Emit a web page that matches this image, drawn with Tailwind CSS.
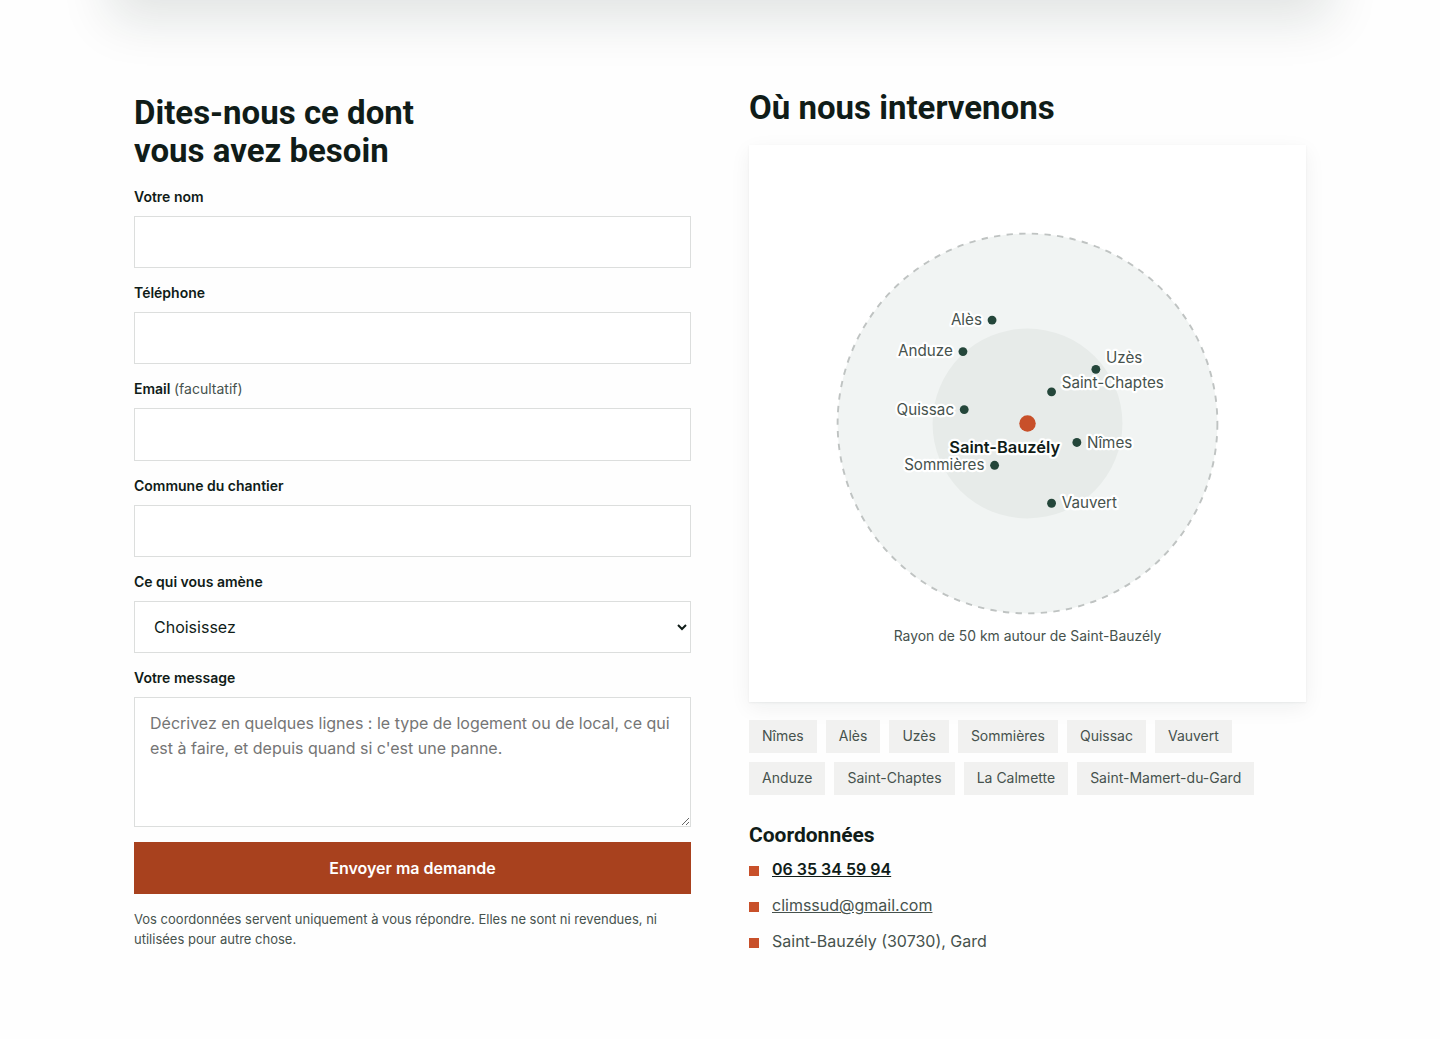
<!DOCTYPE html>
<html lang="fr">
  <head>
    <title>Demande de devis</title>
    <meta charset="UTF-8" />
    <meta name="viewport" content="width=device-width, initial-scale=1" />
    <script src="https://cdn.jsdelivr.net/npm/@tailwindcss/browser@4"></script>
  </head>

  <body class="bg-[#fefefe] font-['Inter',sans-serif] text-[#101c18] overflow-x-hidden">
    <!-- bottom of the previous panel, only its shadow shows -->
    <div class="-mt-60 h-60 max-w-[1220px] mx-auto shadow-[0_20px_48px_rgba(16,40,32,0.12)]"></div>

    <main class="max-w-[1220px] mx-auto px-6 pt-[89px] pb-20">
      <div class="grid grid-cols-1 md:grid-cols-2 gap-[58px] items-start">

        <form class="flex flex-col pt-[5px]" action="#" method="post">
          <h2 class="mb-4 font-['Roboto',sans-serif] text-[33px] leading-[38px] font-bold">Dites-nous ce dont<br />vous avez besoin</h2>

          <label for="nom" class="mb-2 text-sm leading-[22px] font-semibold">Votre nom</label>
          <input id="nom" name="nom" type="text" class="h-[52px] mb-[14px] px-[15px] bg-white border border-[#dcdedd]" />

          <label for="telephone" class="mb-2 text-sm leading-[22px] font-semibold">Téléphone</label>
          <input id="telephone" name="telephone" type="tel" class="h-[52px] mb-[14px] px-[15px] bg-white border border-[#dcdedd]" />

          <label for="email" class="mb-2 text-sm leading-[22px] font-semibold">Email <span class="font-normal text-[#46524d]">(facultatif)</span></label>
          <input id="email" name="email" type="email" class="h-[53px] mb-[14px] px-[15px] bg-white border border-[#dcdedd]" />

          <label for="commune" class="mb-2 text-sm leading-[22px] font-semibold">Commune du chantier</label>
          <input id="commune" name="commune" type="text" class="h-[52px] mb-[14px] px-[15px] bg-white border border-[#dcdedd]" />

          <label for="motif" class="mb-2 text-sm leading-[22px] font-semibold">Ce qui vous amène</label>
          <select id="motif" name="motif" class="h-[52px] mb-[14px] px-[15px] bg-white border border-[#dcdedd] text-base">
            <option>Choisissez</option>
            <option>Climatisation</option>
            <option>Dépannage</option>
            <option>Entretien</option>
          </select>

          <label for="message" class="mb-2 text-sm leading-[22px] font-semibold">Votre message</label>
          <textarea id="message" name="message" class="h-[130px] mb-[15px] px-[15px] py-[13px] bg-white border border-[#dcdedd] text-base leading-[25px] resize-y placeholder:text-[#757575]" placeholder="Décrivez en quelques lignes : le type de logement ou de local, ce qui est à faire, et depuis quand si c'est une panne."></textarea>

          <button type="submit" class="h-[52px] bg-[#a8411e] text-base font-semibold text-white cursor-pointer hover:bg-[#8f3518]">Envoyer ma demande</button>
          <p class="mt-[15px] text-[13px] leading-5 text-[#46524d]">Vos coordonnées servent uniquement à vous répondre. Elles ne sont ni revendues, ni utilisées pour autre chose.</p>
        </form>

        <section>
          <h2 class="mb-[18px] font-['Roboto',sans-serif] text-[33px] leading-[38px] font-bold">Où nous intervenons</h2>

          <div class="bg-white shadow-[0_1px_2px_rgba(16,40,32,0.06),0_6px_20px_rgba(16,40,32,0.06)]">
            <svg class="block w-full h-auto font-['Inter',sans-serif]" viewBox="0 0 440 440" role="img" aria-label="Zone d'intervention autour de Saint-Bauzély">
              <circle cx="220" cy="220" r="150" fill="#f1f4f3" stroke="#bfc3c2" stroke-width="1.5" stroke-dasharray="5 5" />
              <circle cx="220" cy="220" r="75" fill="#e7ebe9" />

              <g font-size="12" fill="#46524d" stroke="#ffffff" stroke-width="3.5" stroke-linejoin="round" paint-order="stroke">
                <text x="184" y="142" text-anchor="end">Alès</text>
                <text x="161" y="167" text-anchor="end">Anduze</text>
                <text x="282" y="172">Uzès</text>
                <text x="247" y="192">Saint-Chaptes</text>
                <text x="162" y="213" text-anchor="end">Quissac</text>
                <text x="267" y="239">Nîmes</text>
                <text x="186" y="257" text-anchor="end">Sommières</text>
                <text x="247" y="287">Vauvert</text>
                <text x="202" y="243" text-anchor="middle" font-size="13" font-weight="600" fill="#101c18">Saint-Bauzély</text>
              </g>

              <g fill="#24463a">
                <circle cx="192" cy="138.3" r="3.5" />
                <circle cx="169" cy="163.2" r="3.5" />
                <circle cx="274" cy="177.2" r="3.5" />
                <circle cx="239" cy="195" r="3.5" />
                <circle cx="170" cy="209" r="3.5" />
                <circle cx="259" cy="235" r="3.5" />
                <circle cx="194" cy="253" r="3.5" />
                <circle cx="239" cy="283" r="3.5" />
              </g>
              <circle cx="220" cy="220" r="6.5" fill="#c8502a" />

              <text x="220" y="392" text-anchor="middle" font-size="11" fill="#46524d">Rayon de 50 km autour de Saint-Bauzély</text>
            </svg>
          </div>

          <ul class="mt-[18px] flex flex-wrap gap-[9px] text-sm leading-8 text-[#46524d]">
            <li class="px-[13px] pb-px bg-[#f1f1f0]">Nîmes</li>
            <li class="px-[13px] pb-px bg-[#f1f1f0]">Alès</li>
            <li class="px-[13px] pb-px bg-[#f1f1f0]">Uzès</li>
            <li class="px-[13px] pb-px bg-[#f1f1f0]">Sommières</li>
            <li class="px-[13px] pb-px bg-[#f1f1f0]">Quissac</li>
            <li class="px-[13px] pb-px bg-[#f1f1f0]">Vauvert</li>
            <li class="px-[13px] pb-px bg-[#f1f1f0]">Anduze</li>
            <li class="px-[13px] pb-px bg-[#f1f1f0]">Saint-Chaptes</li>
            <li class="px-[13px] pb-px bg-[#f1f1f0]">La Calmette</li>
            <li class="px-[13px] pb-px bg-[#f1f1f0]">Saint-Mamert-du-Gard</li>
          </ul>

          <h3 class="mt-7 mb-[9px] font-['Roboto',sans-serif] text-[21px] leading-6 font-bold">Coordonnées</h3>
          <ul class="flex flex-col gap-[10px] text-base leading-[26px] text-[#46524d]">
            <li class="flex items-start gap-[13px]">
              <span class="mt-[10px] size-[10px] bg-[#c8502a]"></span>
              <a href="tel:+33635345994" class="font-semibold text-[#101c18] underline">06 35 34 59 94</a>
            </li>
            <li class="flex items-start gap-[13px]">
              <span class="mt-[10px] size-[10px] bg-[#c8502a]"></span>
              <a href="mailto:climssud@gmail.com" class="underline">climssud@gmail.com</a>
            </li>
            <li class="flex items-start gap-[13px]">
              <span class="mt-[10px] size-[10px] bg-[#c8502a]"></span>
              Saint-Bauzély (30730), Gard
            </li>
          </ul>
        </section>

      </div>
    </main>
  </body>
</html>
